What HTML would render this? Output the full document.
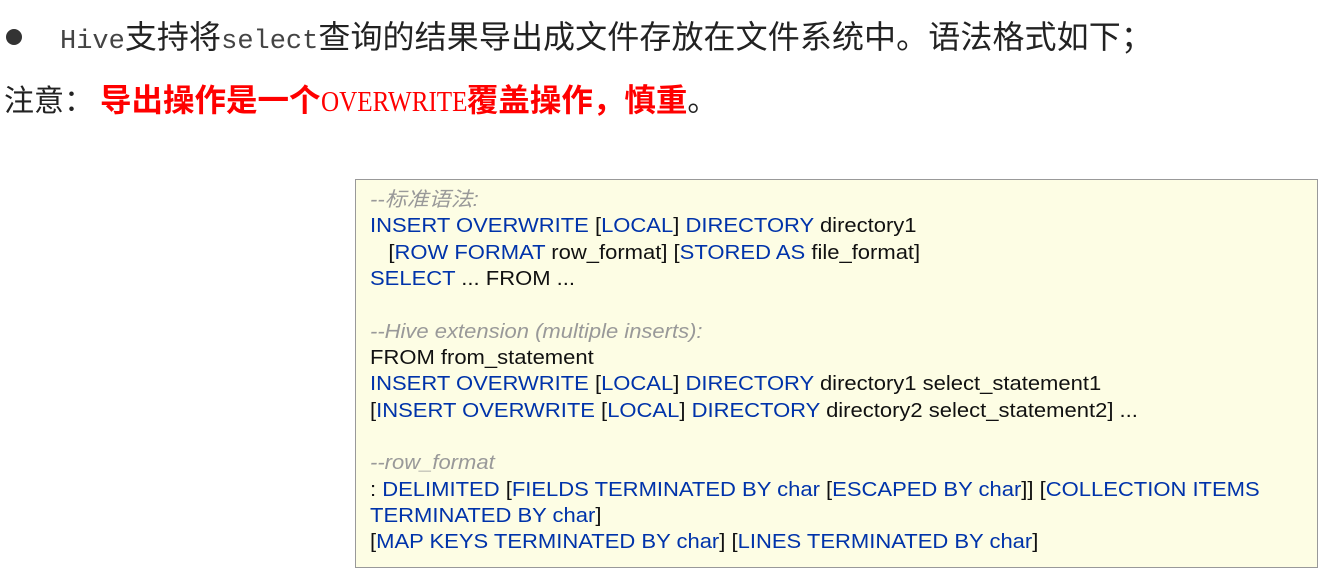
<!DOCTYPE html>
<html><head><meta charset="utf-8"><style>
body{margin:0;width:1321px;height:570px;background:#fff;position:relative;overflow:hidden;font-family:"Liberation Sans","Noto Sans CJK SC",sans-serif}
.l1{position:absolute;left:0;top:15px;font-size:32px;letter-spacing:0.1px;color:#222;white-space:nowrap;line-height:44px}
.dot{position:absolute;left:6px;top:29px;width:16px;height:16px;border-radius:50%;background:#333}
.m{font-family:"Liberation Mono","Noto Sans CJK SC",monospace;font-size:27px;letter-spacing:0;color:#444}
.l2{position:absolute;left:4px;top:78px;font-size:30px;color:#222;white-space:nowrap;line-height:44px}
.r{color:#f00;font-weight:bold;font-size:31.5px;margin-left:6px}
.rm{color:#f00;font-family:"Liberation Serif",serif;font-size:28px;font-weight:normal;transform:scaleX(.897);display:inline-block;transform-origin:left;margin-right:-17px}
.box{position:absolute;left:355px;top:179px;width:961px;height:387px;border:1px solid #999;background:#fdfde4}
.code{position:absolute;left:14px;top:7px;font-size:20px;line-height:26.35px;color:#111;white-space:pre;transform:scaleX(1.1);transform-origin:left top}
.b{color:#0033aa}.c{color:#999;font-style:italic}
</style></head><body>
<div class="dot"></div>
<div class="l1" style="left:60px"><span class="m">Hive</span>支持将<span class="m">select</span>查询的结果导出成文件存放在文件系统中。语法格式如下；</div>
<div class="l2">注意：<span class="r">导出操作是一个<span class="rm">OVERWRITE</span>覆盖操作，慎重</span>。</div>
<div class="box"><div class="code"><span class="c">--标准语法:</span>
<span class="b">INSERT OVERWRITE</span> [<span class="b">LOCAL</span>] <span class="b">DIRECTORY</span> directory1
   [<span class="b">ROW FORMAT</span> row_format] [<span class="b">STORED AS</span> file_format]
<span class="b">SELECT</span> ... FROM ...

<span class="c">--Hive extension (multiple inserts):</span>
FROM from_statement
<span class="b">INSERT OVERWRITE</span> [<span class="b">LOCAL</span>] <span class="b">DIRECTORY</span> directory1 select_statement1
[<span class="b">INSERT OVERWRITE</span> [<span class="b">LOCAL</span>] <span class="b">DIRECTORY</span> directory2 select_statement2] ...

<span class="c">--row_format</span>
: <span class="b">DELIMITED</span> [<span class="b">FIELDS TERMINATED BY char</span> [<span class="b">ESCAPED BY char</span>]] [<span class="b">COLLECTION ITEMS</span>
<span class="b">TERMINATED BY char</span>]
[<span class="b">MAP KEYS TERMINATED BY char</span>] [<span class="b">LINES TERMINATED BY char</span>]</div></div>
</body></html>
